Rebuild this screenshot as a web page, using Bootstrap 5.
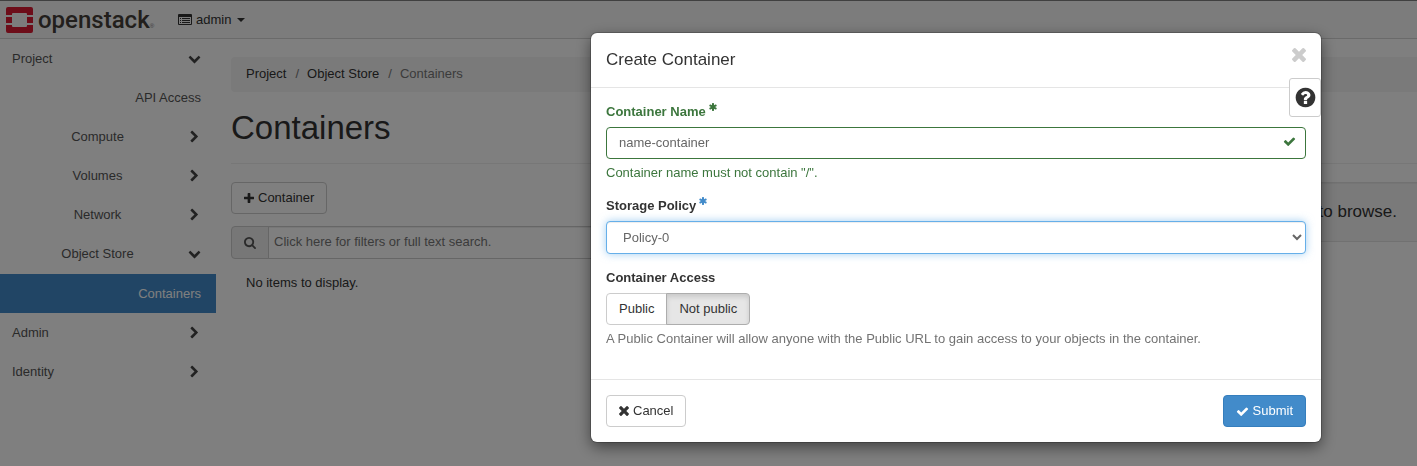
<!DOCTYPE html>
<html lang="en">
<head>
<meta charset="utf-8">
<meta name="viewport" content="width=device-width, initial-scale=1">
<title>Containers - OpenStack Dashboard</title>
<link href="https://cdn.jsdelivr.net/npm/bootstrap@5.3.0/dist/css/bootstrap.min.css" rel="stylesheet">
<style>
body { font: 13px/18px "Liberation Sans", Arial, sans-serif; color: #333; background: #fff; }
a { color: inherit; text-decoration: none; }
.ico { width: 13px; height: 13px; fill: currentColor; flex: none; }

/* Top bar */
.topbar { height: 39px; padding: 0 6px; background: #f8f8f8; border-top: 1px solid #808080; border-bottom: 1px solid #d4d4d4; }
.brand-mark { width: 27px; height: 26px; }
.brand-word { font: 500 24px/30px Roboto, sans-serif; color: #443e38; margin-left: 5px; }
.brand-reg { font-size: 6px; line-height: 6px; color: #777; margin-top: 12px; }
.project-menu { gap: 4px; margin-left: 24px; padding: 0; font-size: 13px; line-height: 18px; color: #333; border: 0; }
.project-menu .ico { width: 14px; }
.project-menu::after { margin-left: 1px; border-width: 4px 4px 0; }

/* Sidebar */
.sidebar { width: 216px; flex: none; }
.side-row { display: flex; align-items: center; width: 100%; padding: 10px 15px 10px 12px; line-height: 19px; gap: 5px; color: #555; background: none; border: 0; text-align: left; }
.side-row .ico { color: #444; }
.side-sub .side-row { text-align: center; }
.side-sub .side-row.side-leaf { text-align: right; }
.side-row.active { background: #428bca; color: #fff; }
.side-third { padding-top: 1px; }

/* Main column */
.page-main { padding: 18px 0 0 15px; }
.crumbs { padding: 8px 15px 9px; border-radius: 4px 0 0 4px; background: #f5f5f5; font-size: 13px; margin: 0; }
.crumbs .breadcrumb-item + .breadcrumb-item { padding-left: 9px; }
.crumbs .breadcrumb-item + .breadcrumb-item::before { padding-right: 8px; color: #777; }
.crumbs .breadcrumb-item.active { color: #777; }
.page-title { font-size: 33px; line-height: 36px; font-weight: 400; margin: 18px 0 0; padding-bottom: 17px; border-bottom: 1px solid #eee; }
.browser-row { margin-top: 18px; }
.btn-std { --bs-btn-font-size: 13px; --bs-btn-line-height: 18px; --bs-btn-padding-x: 12px; --bs-btn-padding-y: 6px; --bs-btn-border-radius: 4px;
  --bs-btn-color: #333; --bs-btn-bg: #fff; --bs-btn-border-color: #ccc; --bs-btn-active-color: #333; --bs-btn-active-bg: #e6e6e6; --bs-btn-active-border-color: #adadad;
  --bs-btn-hover-color: #333; --bs-btn-hover-bg: #e6e6e6; --bs-btn-hover-border-color: #adadad; display: inline-flex; align-items: center; gap: 4px; }
.btn-std .ico { width: 10px; height: 10px; }
.btn-go { --bs-btn-color: #fff; --bs-btn-bg: #428bca; --bs-btn-border-color: #357ebd; --bs-btn-hover-color: #fff; --bs-btn-hover-bg: #3071a9; --bs-btn-hover-border-color: #285e8e; }
.btn-go .ico { width: 13px; height: 13px; }
.list-col { flex: 0 0 30%; min-width: 370px; }
.search-addon { padding: 6px 12px; background: #eee; border-color: #ccc; border-radius: 4px; color: #555; }
.search-addon .ico { width: 12px; height: 12px; }
.search-box { padding: 6px 5px 8px; font-size: 13px; line-height: 17px; border-color: #ccc; box-shadow: inset 0 1px 1px rgba(0,0,0,.075); }
.search-box::placeholder { color: #777; }
.empty-note { margin: 0; padding: 15px; }
.well-panel { background: #f5f5f5; border: 1px solid #e3e3e3; border-right: 0; padding: 20px 20px 20px; font-size: 17px; line-height: 18px; box-shadow: inset 0 1px 1px rgba(0,0,0,.05); }

/* Dialog */
.create-dialog { max-width: 730px; margin: 33px 96px 20px auto; }
.create-box { border: 0; border-radius: 6px; color: #333; box-shadow: 0 0 0 1px rgba(0,0,0,.2), 0 5px 15px rgba(0,0,0,.5); }
.create-box .modal-header { padding: 15px; align-items: flex-start; border-color: #e5e5e5; }
.create-box .modal-title { font-size: 17px; line-height: 24px; }
.close-x { padding: 0; border: 0; background: none; color: #ccc; }
.close-x .ico { display: block; width: 14px; height: 14px; }
.create-box .modal-body { padding: 15px 15px 31px; }
.create-box .modal-footer { padding: 15px; border-color: #e5e5e5; }
.create-box .modal-footer > * { margin: 0; }
.field { margin-bottom: 15px; }
.field-label { display: flex; gap: 3px; font-weight: 700; font-size: 13px; line-height: 18px; margin-bottom: 6px; }
.field-label .ico { width: 8px; height: 8px; color: #428bca; }
.field-input { font-size: 13px; line-height: 18px; padding: 6px 12px; color: #666; border-radius: 4px; }
select.field-input { appearance: auto; height: 33px; border-color: #66afe9; box-shadow: inset 0 1px 1px rgba(0,0,0,.075), 0 0 8px rgba(102,175,233,.6); }
.field-ok, .field-ok .field-label .ico { color: #3c763d; }
.field-ok .field-input { border-color: #3c763d; }
.field-note { margin: 5px 0 0; }
.note-muted { color: #737373; }
.tick { position: absolute; right: 10px; top: 8px; }
.access-group .btn-check:checked + .btn { box-shadow: inset 0 3px 5px rgba(0,0,0,.125); }
.help-tab { position: absolute; right: 0; top: 45px; width: 32px; height: 39px; padding: 0; border: 1px solid #ccc; border-radius: 3px; background: #fff; color: #333; }
.help-tab .ico { width: 23px; height: 23px; }
</style>
</head>
<body>
<svg class="d-none" aria-hidden="true">
  <symbol id="down" viewBox="0 0 1792 1792"><path d="M1683 808l-742 741q-19 19-45 19t-45-19l-742-741q-19-19-19-45.500t19-45.500l166-165q19-19 45-19t45 19l531 531 531-531q19-19 45-19t45 19l166 165q19 19 19 45.500t-19 45.500z"/></symbol>
  <symbol id="right" viewBox="0 0 1792 1792"><path d="M1363 941l-742 742q-19 19-45 19t-45-19l-166-166q-19-19-19-45t19-45l531-531-531-531q-19-19-19-45t19-45l166-166q19-19 45-19t45 19l742 742q19 19 19 45t-19 45z"/></symbol>
  <symbol id="plus" viewBox="192 128 1408 1408"><path d="M1600 736v192q0 40-28 68t-68 28h-416v416q0 40-28 68t-68 28h-192q-40 0-68-28t-28-68v-416h-416q-40 0-68-28t-28-68v-192q0-40 28-68t68-28h416v-416q0-40 28-68t68-28h192q40 0 68 28t28 68v416h416q40 0 68 28t28 68z"/></symbol>
  <symbol id="times" viewBox="302 366 1188 1188"><path d="M1490 1322q0 40-28 68l-136 136q-28 28-68 28t-68-28l-294-294-294 294q-28 28-68 28t-68-28l-136-136q-28-28-28-68t28-68l294-294-294-294q-28-28-28-68t28-68l136-136q28-28 68-28t68 28l294 294 294-294q28-28 68-28t68 28l136 136q28 28 28 68t-28 68l-294 294 294 294q28 28 28 68z"/></symbol>
  <symbol id="check" viewBox="0 0 1792 1792"><path d="M1671 566q0 40-28 68l-724 724-136 136q-28 28-68 28t-68-28l-136-136-362-362q-28-28-28-68t28-68l136-136q28-28 68-28t68 28l294 295 656-657q28-28 68-28t68 28l136 136q28 28 28 68z"/></symbol>
  <symbol id="search" viewBox="64 128 1664 1664"><path d="M1216 832q0-185-131.500-316.500t-316.500-131.500-316.500 131.500-131.500 316.500 131.500 316.500 316.500 131.500 316.500-131.500 131.500-316.500zm512 832q0 52-38 90t-90 38q-54 0-90-38l-343-342q-179 124-399 124-143 0-273.500-55.500t-225-150-150-225-55.500-273.500 55.500-273.500 150-225 225-150 273.500-55.500 273.500 55.500 225 150 150 225 55.500 273.500q0 220-124 399l343 343q37 37 37 90z"/></symbol>
  <symbol id="asterisk" viewBox="128 128 1536 1536"><path d="M1546 1050q46 26 59.500 77.500t-12.500 97.500l-64 110q-26 46-77.500 59.500t-97.500-12.500l-266-153v307q0 52-38 90t-90 38h-128q-52 0-90-38t-38-90v-307l-266 153q-46 26-97.500 12.500t-77.500-59.500l-64-110q-26-46-12.500-97.500t59.500-77.500l266-154-266-154q-46-26-59.500-77.500t12.500-97.500l64-110q26-46 77.500-59.500t97.500 12.500l266 153v-307q0-52 38-90t90-38h128q52 0 90 38t38 90v307l266-153q46-26 97.500-12.500t77.500 59.500l64 110q26 46 12.500 97.500t-59.500 77.500l-266 154z"/></symbol>
  <symbol id="question" viewBox="0 0 1792 1792"><path d="M1024 1376v-192q0-14-9-23t-23-9h-192q-14 0-23 9t-9 23v192q0 14 9 23t23 9h192q14 0 23-9t9-23zm256-672q0-88-55.500-163t-138.500-116-170-41q-243 0-371 213-15 24 8 42l132 100q7 6 19 6 16 0 25-12 53-68 86-92 34-24 86-24 48 0 85.500 26t37.500 59q0 38-20 61t-68 45q-63 28-115.500 86.500t-52.500 125.500v36q0 14 9 23t23 9h192q14 0 23-9t9-23q0-19 21.500-49.500t54.500-49.500q32-18 49-28.500t46-35 44.500-48 28-60.500 12.500-81zm384 192q0 209-103 385.500t-279.500 279.500-385.500 103-385.500-103-279.500-279.500-103-385.500 103-385.500 279.500-279.500 385.500-103 385.500 103 279.500 279.500 103 385.500z"/></symbol>
  <symbol id="listalt" viewBox="0 0 14 13"><path fill-rule="evenodd" d="M1 1h12q1 0 1 1v9q0 1-1 1H1q-1 0-1-1V2q0-1 1-1zM1 4v7h12V4zM2 5h1v1H2zM4 5h8v1H4zM2 7h1v1H2zM4 7h8v1H4zM2 9h1v1H2zM4 9h8v1H4z"/></symbol>
</svg>

<nav class="topbar d-flex align-items-center">
  <a href="#" class="d-flex align-items-center" aria-label="OpenStack home">
    <svg class="brand-mark" viewBox="0 0 27 26" fill="#da1a32"><path d="M2 0h23q2 0 2 2v6h-6V7q0-1-1-1H7Q6 6 6 7v1H0V2q0-2 2-2zM0 10h6v6H0zM21 10h6v6h-6zM0 18h6v1q0 1 1 1h13q1 0 1-1v-1h6v6q0 2-2 2H2q-2 0-2-2z"/></svg>
    <span class="brand-word">openstack</span><span class="brand-reg">®</span>
  </a>
  <button type="button" class="btn project-menu dropdown-toggle d-flex align-items-center"><svg class="ico"><use href="#listalt"/></svg> admin</button>
</nav>

<div class="d-flex">
  <aside class="sidebar">
    <ul class="list-unstyled mb-0">
      <li><button class="side-row" type="button"><span class="flex-grow-1">Project</span><svg class="ico"><use href="#down"/></svg></button>
        <ul class="list-unstyled side-sub">
          <li><a href="#" class="side-row side-leaf"><span class="flex-grow-1">API Access</span></a></li>
          <li><button class="side-row" type="button"><span class="flex-grow-1">Compute</span><svg class="ico"><use href="#right"/></svg></button></li>
          <li><button class="side-row" type="button"><span class="flex-grow-1">Volumes</span><svg class="ico"><use href="#right"/></svg></button></li>
          <li><button class="side-row" type="button"><span class="flex-grow-1">Network</span><svg class="ico"><use href="#right"/></svg></button></li>
          <li><button class="side-row" type="button"><span class="flex-grow-1">Object Store</span><svg class="ico"><use href="#down"/></svg></button>
            <ul class="list-unstyled side-third">
              <li><a href="#" class="side-row side-leaf active"><span class="flex-grow-1">Containers</span></a></li>
            </ul>
          </li>
        </ul>
      </li>
      <li><button class="side-row" type="button"><span class="flex-grow-1">Admin</span><svg class="ico"><use href="#right"/></svg></button></li>
      <li><button class="side-row" type="button"><span class="flex-grow-1">Identity</span><svg class="ico"><use href="#right"/></svg></button></li>
    </ul>
  </aside>

  <main class="page-main flex-grow-1">
    <ol class="breadcrumb crumbs">
      <li class="breadcrumb-item"><a href="#">Project</a></li>
      <li class="breadcrumb-item"><a href="#">Object Store</a></li>
      <li class="breadcrumb-item active">Containers</li>
    </ol>
    <h1 class="page-title">Containers</h1>
    <div class="browser-row d-flex gap-3 align-items-start">
      <div class="list-col">
        <button type="button" class="btn btn-std"><svg class="ico"><use href="#plus"/></svg>Container</button>
        <div class="input-group mt-2 pt-1">
          <span class="input-group-text search-addon"><svg class="ico"><use href="#search"/></svg></span>
          <input type="text" class="form-control search-box" placeholder="Click here for filters or full text search." aria-label="Filter containers">
        </div>
        <p class="empty-note">No items to display.</p>
      </div>
      <div class="well-panel flex-grow-1 text-end">Select a container to browse.</div>
    </div>
  </main>
</div>

<div class="modal-backdrop show"></div>
<div class="modal d-block" tabindex="-1" role="dialog" aria-labelledby="dialog-title">
  <div class="modal-dialog create-dialog">
    <form class="modal-content create-box">
      <div class="modal-header">
        <h2 class="modal-title fw-normal" id="dialog-title">Create Container</h2>
        <button type="button" class="close-x" aria-label="Close"><svg class="ico"><use href="#times"/></svg></button>
      </div>
      <button type="button" class="help-tab d-flex align-items-center justify-content-center" aria-label="Help"><svg class="ico"><use href="#question"/></svg></button>
      <div class="modal-body">
        <div class="field field-ok">
          <label class="field-label" for="cname">Container Name <svg class="ico"><use href="#asterisk"/></svg></label>
          <div class="position-relative">
            <input type="text" class="form-control field-input" id="cname" value="name-container">
            <svg class="ico tick"><use href="#check"/></svg>
          </div>
          <p class="field-note">Container name must not contain "/".</p>
        </div>
        <div class="field">
          <label class="field-label" for="policy">Storage Policy <svg class="ico"><use href="#asterisk"/></svg></label>
          <select class="form-control field-input" id="policy"><option>Policy-0</option></select>
        </div>
        <div role="group" aria-labelledby="access-label">
          <span class="field-label" id="access-label">Container Access</span>
          <div class="btn-group access-group d-flex w-auto">
            <input type="radio" class="btn-check" name="access" id="acc-pub"><label class="btn btn-std flex-grow-0" for="acc-pub">Public</label>
            <input type="radio" class="btn-check" name="access" id="acc-not" checked><label class="btn btn-std flex-grow-0" for="acc-not">Not public</label>
          </div>
          <p class="field-note note-muted">A Public Container will allow anyone with the Public URL to gain access to your objects in the container.</p>
        </div>
      </div>
      <div class="modal-footer justify-content-between">
        <button type="button" class="btn btn-std"><svg class="ico"><use href="#times"/></svg>Cancel</button>
        <button type="submit" class="btn btn-std btn-go"><svg class="ico"><use href="#check"/></svg>Submit</button>
      </div>
    </form>
  </div>
</div>
<script src="https://cdn.jsdelivr.net/npm/bootstrap@5.3.0/dist/js/bootstrap.bundle.min.js"></script>
</body>
</html>
